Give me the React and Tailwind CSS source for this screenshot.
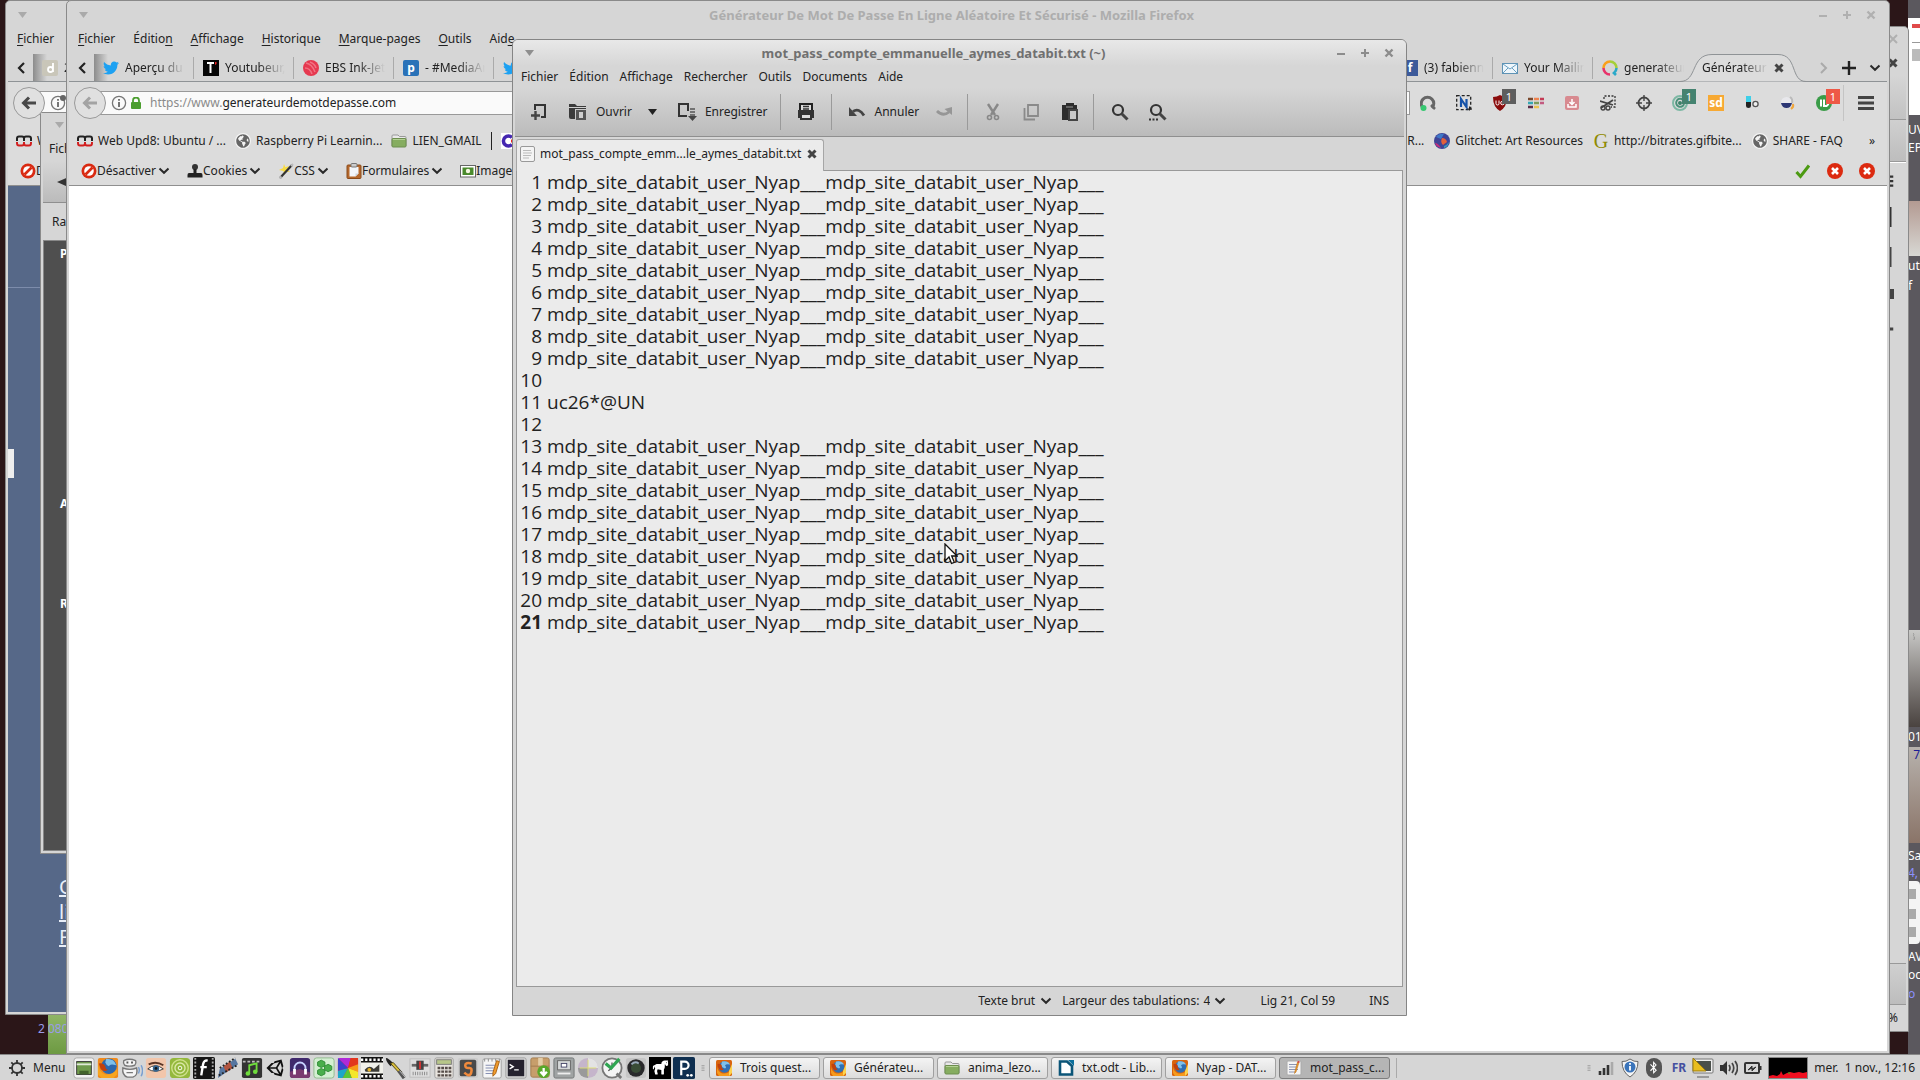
import { useState } from 'react'
import { FaTwitter, FaBluetoothB, FaGlobeAmericas, FaHorse, FaUnity } from 'react-icons/fa'

const LINE = 'mdp_site_databit_user_Nyap___mdp_site_databit_user_Nyap___'
const documentLines = [
  ...Array(9).fill(LINE),
  '',
  'uc26*@UN',
  '',
  ...Array(9).fill(LINE),
]

/* ---------- small glyphs ---------- */

function Svg({ size = 16, className = '', children, box = '0 0 16 16' }) {
  return (
    <svg viewBox={box} width={size} height={size} className={'shrink-0 ' + className} aria-hidden="true">
      {children}
    </svg>
  )
}

const Chevron = ({ className = '' }) => (
  <svg viewBox="0 0 12 8" width="12" height="8" className={'shrink-0 pointer-events-none ' + className} aria-hidden="true">
    <path d="M1.5 1.5 6 5.8l4.500-4.300" fill="none" stroke="#2a2a2a" strokeWidth="2" />
  </svg>
)

const Caret = ({ color = '#aaa' }) => (
  <svg viewBox="0 0 9 6" width="9" height="6" className="shrink-0" aria-hidden="true">
    <path d="M0 0h9L4.500 6z" fill={color} />
  </svg>
)

const BoldX = () => (
  <Svg size={10} box="0 0 10 10"><path d="M1.500 1.500l7 7M8.500 1.500l-7 7" stroke="#444" strokeWidth="3" /></Svg>
)

const Globe = () => (
  <span className="flex size-4 shrink-0 items-center justify-center rounded-full bg-[#f4f4f4]">
    <FaGlobeAmericas size={14} color="#666" />
  </span>
)

const WebUpd8Icon = () => (
  <Svg>
    <path d="M1 8V5.500Q1 3.500 3 3.500h3Q8 3.500 8 5.500V8M8 8V5.500q0-2 2-2h3q2 0 2 2V8" fill="none" stroke="#222" strokeWidth="2" />
    <path d="M1 9v1q0 2.500 2 2.500h3q2 0 2-2.500V9M8 9v1q0 2.500 2 2.500h3q2 0 2-2.500V9" fill="none" stroke="#d21f1f" strokeWidth="2" />
  </Svg>
)

const Folder = () => (
  <Svg>
    <path d="M1 3q0-1 1-1h5l1.500 1.500H14q1 0 1 1V13H1z" fill="#e8e8e8" stroke="#999" />
    <rect x="1" y="5.500" width="14" height="8.500" rx="1" fill="#86ad60" stroke="#6d8e4e" />
    <path d="M2 6.500h12" stroke="#b3d094" />
  </Svg>
)

const NoEntry = () => (
  <Svg>
    <circle cx="8" cy="8" r="7.500" fill="#d92a12" />
    <circle cx="8" cy="8" r="4.800" fill="#fff" />
    <path d="M4.500 11.500l7-7" stroke="#d92a12" strokeWidth="2.600" />
  </Svg>
)

const CookieStamp = () => (
  <Svg>
    <circle cx="8" cy="4" r="3" fill="#333" />
    <path d="M6.500 6h3v4H14q1.500 0 1.500 2v2.500h-15V12q0-2 1.500-2h4.500z" fill="#222" />
  </Svg>
)

const Wand = () => (
  <Svg>
    <path d="M6 1l1.300 3.200L11 3 9 6.500l3 2.500-4-.5L6 12 5.500 8 1 7l4-2z" fill="#f8dc45" />
    <path d="M2 15L14 2" stroke="#333" strokeWidth="2.200" />
    <path d="M13 3l2-2M1.500 15.500l2-2" stroke="#bbb" strokeWidth="2" />
  </Svg>
)

const Clipboard = () => (
  <Svg>
    <rect x="1" y="2" width="14" height="13.500" rx="1" fill="#b5682c" stroke="#8a4a1a" />
    <path d="M3.500 4h9v6.500l-3 3h-6z" fill="#f3f6fa" />
    <path d="M9.500 13.500v-3h3" fill="#cdd3da" />
    <rect x="5" y="0.500" width="6" height="3.500" rx="1" fill="#ccc" stroke="#777" />
  </Svg>
)

const Picture = () => (
  <Svg>
    <rect x=".5" y="2.500" width="15" height="11.500" fill="#fff" stroke="#666" />
    <rect x="2.500" y="4.500" width="11" height="7.500" fill="#4a8a2c" />
    <circle cx="8" cy="8" r="2.200" fill="#f4f6e0" />
  </Svg>
)

const CIcon = () => (
  <Svg>
    <rect width="16" height="16" fill="#fff" />
    <path d="M11 4.500A5 5 0 1 0 11 11.500" fill="none" stroke="#4527b0" strokeWidth="3.500" />
    <path d="M10 8h6" stroke="#e22" strokeWidth="3" />
  </Svg>
)

const InkJet = () => (
  <Svg>
    <circle cx="8" cy="8" r="8" fill="#e63950" />
    <path d="M3 3q6 1 9 9M2 8q5 0 7 6M7 2q5 2 6 6" fill="none" stroke="#f58a97" strokeWidth="1.600" opacity=".7" />
  </Svg>
)

const Glitchet = () => (
  <Svg>
    <circle cx="8" cy="8" r="8" fill="#3f4496" />
    <path d="M2 4q3-4 8-3l-3 5z" fill="#3f78c8" />
    <path d="M8 5q4 0 5 4l-4 3q-3-3-1-7z" fill="#e2603a" />
    <path d="M1 10q3 0 6 5-5-1-6-5z" fill="#c22f7c" />
    <path d="M10 13q3-1 5-4-1 5-5 6z" fill="#2f9fc0" />
  </Svg>
)

const GrayD = () => (
  <Svg>
    <rect width="16" height="16" rx="2" fill="#c9c6b9" />
    <path d="M11 3v9M11 9.500a2.500 2.500 0 1 1-5 0 2.500 2.500 0 0 1 5 0z" fill="none" stroke="#fff" strokeWidth="1.800" />
  </Svg>
)

const LetterIcon = ({ letter, box }) => (
  <span className={'flex size-4 shrink-0 items-center justify-center text-[12px] font-bold leading-none text-white ' + box}>
    {letter}
  </span>
)

const TIcon = () => (
  <Svg>
    <rect width="16" height="16" fill="#080808" />
    <path d="M4 3h7M7.500 3v10" stroke="#fff" strokeWidth="2" />
    <path d="M12 2h1.500v2L12 5z" fill="#e22" />
  </Svg>
)

const Mail = () => (
  <Svg>
    <rect x=".5" y="3.500" width="15" height="10" fill="#eef6fb" stroke="#5f93b5" />
    <path d="M1 4l7 5 7-5M1 13l5-5M15 13l-5-5" fill="none" stroke="#6aa0c2" />
  </Svg>
)

const Qwant = () => (
  <Svg>
    <path d="M8 1.500A6.500 6.500 0 0 0 1.500 8" fill="none" stroke="#f9a01b" strokeWidth="2.600" />
    <path d="M8 1.500A6.500 6.500 0 0 1 14.500 8" fill="none" stroke="#a5cf3a" strokeWidth="2.600" />
    <path d="M14.500 8a6.500 6.500 0 0 1-2.500 5l2 2" fill="none" stroke="#2aa9c9" strokeWidth="2.600" />
    <path d="M1.500 8A6.500 6.500 0 0 0 8 14.500" fill="none" stroke="#e8336b" strokeWidth="2.600" />
  </Svg>
)

const Firefox = () => (
  <Svg>
    <rect width="16" height="16" rx="1.500" fill="#d9640f" />
    <circle cx="8.500" cy="7" r="5.800" fill="#2f6fb5" />
    <path d="M6 1.500q6-1 8 3-4-1-5 1 2 2 0 3-3-1-4-3z" fill="#7fc0ea" />
    <path d="M1 2q-1 8 4 11 6 2 10-3v4l-2 2H3l-2-3z" fill="#f59a1c" />
    <path d="M1.500 4q3-1 4.500 2-1 2 1.500 3-1 2-3 1-3-2-3-6z" fill="#c2410c" />
    <path d="M13 11l3-7v9l-3 3z" fill="#fcd34d" />
  </Svg>
)

const TextFile = () => (
  <Svg>
    <rect x="1" y="1" width="14" height="14" rx="1" fill="#f5f5f5" stroke="#aaa" />
    <path d="M3 4.500h9M3 7h8M3 9.500h9M3 12h6" stroke="#8b93b0" />
    <path d="M11.500 2l-2.500 9-.5 2.500L10 12l3-9.500z" fill="#f09a2b" stroke="#b56a10" strokeWidth=".5" />
    <path d="M11.300 2.500l1.900.5.500-1.500-1.800-.700z" fill="#d64545" />
  </Svg>
)

const Office = () => (
  <Svg>
    <path d="M2 1.500h7L14 6v8.500H2z" fill="#fff" stroke="#0b5578" strokeWidth="2.600" />
    <path d="M10 0h6v6z" fill="#0b6f9c" />
  </Svg>
)

/* ---------- window pieces ---------- */

function TitleButtons({ color }) {
  return (
    <div className="flex items-center gap-2">
      <button aria-label="Réduire" className="flex size-4 items-center justify-center">
        <Svg size={10} box="0 0 10 10"><path d="M1 6h8" stroke={color} strokeWidth="2" /></Svg>
      </button>
      <button aria-label="Agrandir" className="flex size-4 items-center justify-center">
        <Svg size={10} box="0 0 10 10"><path d="M1 5h8M5 1v8" stroke={color} strokeWidth="2" /></Svg>
      </button>
      <button aria-label="Fermer" className="flex size-4 items-center justify-center">
        <Svg size={10} box="0 0 10 10"><path d="M1.500 1.500l7 7M8.500 1.500l-7 7" stroke={color} strokeWidth="2.400" /></Svg>
      </button>
    </div>
  )
}

const firefoxMenus = [
  ['', 'F', 'ichier'],
  ['Éditio', 'n', ''],
  ['', 'A', 'ffichage'],
  ['', 'H', 'istorique'],
  ['', 'M', 'arque-pages'],
  ['', 'O', 'utils'],
  ['Aid', 'e', ''],
]

function BrowserTab({ icon, label }) {
  return (
    <button className="flex h-[22px] w-[100px] shrink-0 items-center gap-[6px] border-r border-[#aaa] pl-[9px] text-left">
      {icon}
      <span className="w-[60px] overflow-hidden whitespace-nowrap [mask-image:linear-gradient(to_right,black_55%,transparent)]">{label}</span>
    </button>
  )
}

function ActiveTab({ label }) {
  return (
    <div className="relative -mb-px flex h-[28px] w-[112px] shrink-0 items-center">
      <svg viewBox="0 0 126 28" width="126" height="28" className="absolute -left-[13px] top-0" aria-hidden="true">
        <path d="M0 27.500C18 27.500 10 .5 32 .5h66c20 0 12 27 28 27" fill="#dcdcdc" stroke="#8f9396" />
      </svg>
      <button className="relative ml-[9px] w-[66px] overflow-hidden whitespace-nowrap text-left [mask-image:linear-gradient(to_right,black_60%,transparent)]">{label}</button>
      <button aria-label="Fermer l'onglet" className="relative ml-[6px]"><BoldX /></button>
    </div>
  )
}

function Badge({ children, className }) {
  return (
    <span className={'absolute -top-[6px] left-[20px] flex h-[15px] w-[14px] items-center justify-center text-[11px] leading-none text-white ' + className}>
      {children}
    </span>
  )
}

const addons = [
  {
    name: 'Qwant',
    icon: (
      <Svg>
        <path d="M3 13A6.300 6.300 0 1 1 12 13" fill="none" stroke="#666" strokeWidth="3" />
        <path d="M11 10l4 4" stroke="#666" strokeWidth="2.500" />
        <circle cx="3.500" cy="13" r="3" fill="#37c871" />
      </Svg>
    ),
  },
  {
    name: 'Nimbus',
    icon: (
      <Svg>
        <rect x=".7" y=".7" width="14" height="14" fill="none" stroke="#222" strokeWidth="1.300" strokeDasharray="3 2" />
        <path d="M5 12V4l5.500 8V4" fill="none" stroke="#1552a8" strokeWidth="2.200" />
        <path d="M11 14h5M13.500 11.500v4" stroke="#222" />
      </Svg>
    ),
  },
  {
    name: 'uBlock',
    icon: (
      <Svg>
        <path d="M8 0q3 2 7 2 0 10-7 14Q1 12 1 2q4 0 7-2z" fill="#8a0b0b" />
        <path d="M4 5.500v3q0 1.500 1.500 1.500T7 8.500v-3" fill="none" stroke="#fff" />
        <circle cx="10.500" cy="8" r="1.800" fill="none" stroke="#fff" />
      </Svg>
    ),
    badge: ['1', 'bg-[#5e5e5e]'],
  },
  {
    name: 'Palette',
    icon: (
      <Svg>
        <path d="M0 4h5" stroke="#7a4a2e" strokeWidth="2.600" />
        <path d="M6 4h5" stroke="#ef8350" strokeWidth="2.600" />
        <path d="M12 4h4" stroke="#c43b55" strokeWidth="2.600" />
        <path d="M0 8h5" stroke="#35a7b5" strokeWidth="2.600" />
        <path d="M6 8h5" stroke="#7d9c5a" strokeWidth="2.600" />
        <path d="M12 8h4" stroke="#c25a80" strokeWidth="2.600" />
        <path d="M0 12h5" stroke="#5a2e4a" strokeWidth="2.600" />
        <path d="M6 12h5" stroke="#ecc352" strokeWidth="2.600" />
      </Svg>
    ),
  },
  {
    name: 'Télécharger',
    icon: (
      <Svg>
        <rect x="1" y="1" width="14" height="14" rx="2" fill="#d88a90" />
        <path d="M8 4v5M5.500 7L8 9.500 10.500 7M4 9v3h8V9" fill="none" stroke="#fff" strokeWidth="1.500" />
      </Svg>
    ),
  },
  {
    name: 'Capture',
    icon: (
      <Svg>
        <path d="M4 4V1h11v11h-4" fill="none" stroke="#333" strokeWidth="1.300" strokeDasharray="2 1.500" />
        <path d="M0 6l13 4M1 13L13 5" stroke="#444" strokeWidth="1.800" />
        <circle cx="3" cy="13" r="2" fill="none" stroke="#444" strokeWidth="1.400" />
        <circle cx="8" cy="13" r="2" fill="none" stroke="#444" strokeWidth="1.400" />
      </Svg>
    ),
  },
  {
    name: 'Viseur',
    icon: (
      <Svg>
        <circle cx="8" cy="8" r="5.500" fill="none" stroke="#444" strokeWidth="1.800" />
        <path d="M8 0v6M8 10v6M0 8h6M10 8h6" stroke="#444" strokeWidth="1.400" />
      </Svg>
    ),
  },
  {
    name: 'Actualiser',
    icon: (
      <Svg>
        <circle cx="8" cy="8" r="7" fill="none" stroke="#7db8a4" strokeWidth="2" />
        <path d="M11 5a4 4 0 1 0 1 4" fill="none" stroke="#4a917a" strokeWidth="2" />
        <circle cx="8" cy="8" r="2" fill="#3c8168" />
      </Svg>
    ),
    badge: ['1', 'bg-[#458370]'],
  },
  { name: 'sd', icon: <LetterIcon letter="sd" box="bg-[#f7a933]" /> },
  {
    name: 'Pilule',
    icon: (
      <Svg>
        <path d="M2 1h5v6H2z" fill="#3fcfe8" />
        <path d="M2 7h5v4q0 2-2.500 2T2 11z" fill="#222" />
        <circle cx="11.500" cy="9" r="2.600" fill="#eee" stroke="#555" strokeWidth="1.300" />
      </Svg>
    ),
  },
  {
    name: 'Orbite',
    icon: (
      <Svg>
        <circle cx="6.500" cy="7.500" r="5.500" fill="#e8e8ec" />
        <path d="M1 8h11q-1 5-5.500 5T1 8z" fill="#2c3674" />
        <path d="M10 2q3 2 2 6" fill="none" stroke="#bbb" strokeWidth="2" />
        <path d="M13 9q1 3-2 5" fill="none" stroke="#f0a63c" strokeWidth="2" />
      </Svg>
    ),
  },
  {
    name: 'Pushbullet',
    icon: (
      <Svg>
        <circle cx="8" cy="8" r="8" fill="#3a9c48" />
        <path d="M5 4.500v7M8 4.500v6.500h2.500q2-1 2-3" fill="none" stroke="#fff" strokeWidth="2" />
      </Svg>
    ),
    badge: ['1', 'bg-[#ee5846]'],
  },
]

function ToolItem({ icon, label }) {
  return (
    <button className="flex shrink-0 items-center">
      {icon}
      <span>{label}</span>
      <Chevron className="ml-[2px]" />
    </button>
  )
}

function Bookmark({ icon, label }) {
  return (
    <a href="#" className="flex shrink-0 items-center gap-[5px]">
      {icon}
      <span>{label}</span>
    </a>
  )
}

// A covered window only shows the first entry of each bar.
function FirefoxWindow({ id, className, title, tabs, covered, url, page }) {
  const [address, setAddress] = useState(url)
  const menus = covered ? firefoxMenus.slice(0, 1) : firefoxMenus

  return (
    <section className={'absolute flex flex-col overflow-hidden rounded-t-[5px] border border-[#8a8a8a] bg-[#d6d6d6] px-[2px] pb-[2px] whitespace-nowrap ' + className}>
      <header className="flex h-[27px] shrink-0 items-center justify-between pl-[10px] pr-2">
        <Caret />
        <h2 className="text-[13px] font-bold text-[#adadad]">{title}</h2>
        {!covered && <TitleButtons color="#b0b0b0" />}
      </header>

      <nav className="flex h-[22px] shrink-0 items-center gap-[18px] pl-[9px]">
        {menus.map(([before, key, after]) => (
          <button key={before + key + after}>
            {before}<u className="underline-offset-2">{key}</u>{after}
          </button>
        ))}
      </nav>

      <div className="flex h-8 shrink-0 items-end border-b border-[#8f9396]">
        <button aria-label="Onglets précédents" className="flex h-[27px] w-[25px] shrink-0 items-center pl-2">
          <Svg size={12} box="0 0 12 12"><path d="M8 1L3 6l5 5" fill="none" stroke="#222" strokeWidth="2.200" /></Svg>
        </button>
        <div className="flex h-[27px] items-center bg-[linear-gradient(to_right,#8c8c8c,#d6d6d6_14px)]">
          {tabs.map((tab, i) => <BrowserTab key={i} {...tab} />)}
        </div>
        <div className="flex-1" />
        {!covered && (
          <>
            <div className="flex h-[27px] items-center">
              <BrowserTab icon={<LetterIcon letter="f" box="bg-[#3d5a9a]" />} label="(3) fabienne" />
              <BrowserTab icon={<Mail />} label="Your Mailing" />
              <button className="flex h-[22px] w-[100px] shrink-0 items-center gap-[6px] pl-[9px] text-left">
                <Qwant />
                <span className="w-[60px] overflow-hidden [mask-image:linear-gradient(to_right,black_55%,transparent)]">generateur</span>
              </button>
            </div>
            <ActiveTab label="Générateur" />
            <div className="flex h-[27px] w-[82px] shrink-0 items-center justify-end gap-[13px] pr-[6px]">
              <button aria-label="Onglets suivants">
                <Svg size={12} box="0 0 12 12"><path d="M4 1l5 5-5 5" fill="none" stroke="#aaa" strokeWidth="2" /></Svg>
              </button>
              <button aria-label="Nouvel onglet">
                <Svg size={14} box="0 0 14 14"><path d="M0 7h14M7 0v14" stroke="#222" strokeWidth="2.400" /></Svg>
              </button>
              <button aria-label="Tous les onglets"><Chevron /></button>
            </div>
          </>
        )}
      </div>

      <div className="flex h-[43px] shrink-0 items-center bg-[#dcdcdc] pb-[2px] pl-[5px]">
        <button aria-label="Page précédente" className="relative z-10 flex size-8 shrink-0 items-center justify-center rounded-full border border-[#999] bg-[#e0e0e0]">
          <Svg><path d="M15 8H3M8 2.500L2.500 8 8 13.500" fill="none" stroke={covered ? '#484848' : '#a3a3a3'} strokeWidth="3" /></Svg>
        </button>
        <div className="-ml-2 flex h-6 flex-1 items-center border border-[#999] bg-[#fafafa] pl-3">
          <Svg className="mr-[3px]">
            <circle cx="8" cy="8" r="6.600" fill="none" stroke="#777" strokeWidth="1.300" />
            <path d="M8 7v5M8 4v1.800" stroke="#666" strokeWidth="1.800" />
            {covered && <circle cx="13" cy="3" r="3" fill="#666" />}
          </Svg>
          {!covered && (
            <>
              <Svg size={12} box="0 0 12 12" className="mr-[8px]">
                <path d="M3 6V3.500a3 3 0 0 1 6 0V6" fill="none" stroke="#4b9e2f" strokeWidth="1.800" />
                <rect x="1" y="5" width="10" height="7" rx="1" fill="#4b9e2f" />
              </Svg>
              <label htmlFor={id} className="text-[#8a8a8a]">https://www.</label>
              <input
                id={id}
                value={address}
                onChange={(e) => setAddress(e.target.value)}
                className="min-w-0 flex-1 bg-transparent text-[#222] outline-none"
              />
            </>
          )}
        </div>
        {!covered && (
          <div className="flex items-center">
            {addons.map(({ name, icon, badge }) => (
              <button key={name} aria-label={name} className="relative flex w-9 items-center justify-center">
                {icon}
                {badge && <Badge className={badge[1]}>{badge[0]}</Badge>}
              </button>
            ))}
            <div className="ml-[1px] h-9 w-px bg-[#c4c4c4]" />
            <button aria-label="Ouvrir le menu" className="ml-[14px] mr-[13px]">
              <Svg><path d="M0 2.500h16M0 8h16M0 13.500h16" stroke="#444" strokeWidth="3" /></Svg>
            </button>
          </div>
        )}
      </div>

      <div className="flex h-8 shrink-0 items-center justify-between bg-[#dcdcdc] pl-2 pr-3">
        {covered ? (
          <Bookmark icon={<WebUpd8Icon />} label="Web" />
        ) : (
          <>
            <div className="flex items-center gap-[9px]">
              <Bookmark icon={<WebUpd8Icon />} label="Web Upd8: Ubuntu / ..." />
              <Bookmark icon={<Globe />} label="Raspberry Pi Learnin..." />
              <Bookmark icon={<Folder />} label="LIEN_GMAIL" />
              <div className="h-[18px] w-px bg-[#222]" />
              <CIcon />
            </div>
            <div className="flex items-center gap-[10px]">
              <a href="#">R...</a>
              <Bookmark icon={<Glitchet />} label="Glitchet: Art Resources" />
              <Bookmark
                icon={<span className="w-4 text-center font-['Liberation_Serif'] text-[20px] leading-none text-[#8f8a00]">G</span>}
                label="http://bitrates.gifbite..."
              />
              <Bookmark icon={<Globe />} label="SHARE - FAQ" />
              <button className="ml-4">»</button>
            </div>
          </>
        )}
      </div>

      <div className="flex h-[29px] shrink-0 items-center justify-between border-b border-[#8f8f8f] bg-[#dcdcdc] px-3">
        {covered ? (
          <ToolItem icon={<NoEntry />} label="Dés" />
        ) : (
          <>
            <div className="flex items-center gap-[17px]">
              <ToolItem icon={<NoEntry />} label="Désactiver" />
              <ToolItem icon={<CookieStamp />} label="Cookies" />
              <ToolItem icon={<Wand />} label="CSS" />
              <ToolItem icon={<Clipboard />} label="Formulaires" />
              <ToolItem icon={<Picture />} label="Images" />
            </div>
            <div className="flex items-center gap-4">
              <Svg><path d="M1.500 9l4 4.500L14 2.500" fill="none" stroke="#4c9a12" strokeWidth="3" /></Svg>
              {[0, 1].map((n) => (
                <Svg key={n}>
                  <circle cx="8" cy="8" r="8" fill="#dc2a10" />
                  <path d="M5 5l6 6M11 5l-6 6" stroke="#fff" strokeWidth="2.600" />
                </Svg>
              ))}
            </div>
          </>
        )}
      </div>

      <div className={'min-h-0 flex-1 ' + page} />
    </section>
  )
}

/* ---------- text editor ---------- */

const Separator = () => <div className="h-9 w-px bg-[#9a9a9a]" />

function EditorWindow() {
  const [text, setText] = useState(documentLines.join('\n'))
  const lineCount = text.split('\n').length

  return (
    <section className="absolute bottom-[38px] left-[512px] top-[39px] flex w-[895px] flex-col rounded-t-[6px] border border-[#858585] bg-[#d6d6d6] whitespace-nowrap">
      <header className="flex h-[26px] shrink-0 items-center justify-between rounded-t-[5px] bg-linear-to-b from-[#e8e8e8] to-[#d6d6d6] pl-3 pr-[9px]">
        <Caret color="#8f8f8f" />
        <h1 className="text-[13px] font-bold text-[#707070]">mot_pass_compte_emmanuelle_aymes_databit.txt (~)</h1>
        <TitleButtons color="#8c8c8c" />
      </header>

      <nav className="flex h-[22px] shrink-0 items-center gap-[11px] pl-[8px]">
        {['Fichier', 'Édition', 'Affichage', 'Rechercher', 'Outils', 'Documents', 'Aide'].map((item) => (
          <button key={item}>{item}</button>
        ))}
      </nav>

      <div className="mx-[2px] flex h-[49px] shrink-0 items-center border-b border-[#8f8f8f] bg-linear-to-b from-[#d6d6d6] to-[#bbbbbb] pl-[15px]">
        <button aria-label="Nouveau" className="mr-5">
          <Svg size={18} box="0 0 18 18">
            <path d="M5 7V2h10v12h-4" fill="none" stroke="#333" strokeWidth="2" />
            <path d="M1 12.500h9M5.500 8v9" stroke="#444" strokeWidth="2.400" />
          </Svg>
        </button>
        <button className="flex items-center gap-2">
          <Svg size={20} box="0 0 20 20">
            <path d="M1 2h6l2 2h9v3H7v10H3q-2 0-2-2z" fill="#3a3a3a" />
            <path d="M1 5.500h17" stroke="#d0d0d0" />
            <path d="M8 8h10v10H8z" fill="#555" />
            <path d="M11 10h4v6h-4z" fill="#cfcfcf" />
          </Svg>
          Ouvrir
        </button>
        <button aria-label="Documents récents" className="ml-4 mr-5"><Caret color="#222" /></button>
        <button className="mr-[13px] flex items-center gap-2">
          <Svg size={20} box="0 0 20 20">
            <path d="M10 14H2V2h9v7" fill="none" stroke="#333" strokeWidth="2" />
            <path d="M13 7h5M13 10h5M13 13h5" stroke="#555" strokeWidth="1.500" />
            <path d="M11 14h9l-4.500 5z" fill="#444" />
          </Svg>
          Enregistrer
        </button>
        <Separator />
        <button aria-label="Imprimer" className="mx-4">
          <Svg size={18} box="0 0 18 18">
            <path d="M3 7V1h12v6" fill="#ddd" stroke="#222" strokeWidth="2" />
            <path d="M6 3.500h6M6 6h6" stroke="#333" strokeWidth="1.400" />
            <path d="M1 7h16v8h-2v2H3v-2H1z" fill="#333" />
            <path d="M5 12h8v3H5z" fill="#ddd" />
          </Svg>
        </button>
        <Separator />
        <button className="ml-4 mr-4 flex items-center gap-2">
          <Svg size={18} box="0 0 18 18">
            <path d="M5 8.500q6-4 11 4" fill="none" stroke="#444" strokeWidth="2.800" />
            <path d="M1 4v9h8z" fill="#444" />
          </Svg>
          Annuler
        </button>
        <button aria-label="Rétablir" className="mr-[14px]">
          <Svg size={18} box="0 0 18 18">
            <path d="M2 8q6 6 12 1" fill="none" stroke="#969696" strokeWidth="2.800" />
            <path d="M17 4v8L9.500 6z" fill="#969696" />
          </Svg>
        </button>
        <Separator />
        <button aria-label="Couper" className="ml-4">
          <Svg size={18} box="0 0 18 18">
            <path d="M4 1l7 11M14 1L7 12" stroke="#888" strokeWidth="2.400" />
            <circle cx="5.500" cy="14.500" r="2" fill="none" stroke="#888" strokeWidth="1.600" />
            <circle cx="12.500" cy="14.500" r="2" fill="none" stroke="#888" strokeWidth="1.600" />
          </Svg>
        </button>
        <button aria-label="Copier" className="ml-5">
          <Svg size={18} box="0 0 18 18">
            <path d="M6 2h10v11H6z" fill="none" stroke="#8a8a8a" strokeWidth="1.800" />
            <path d="M2.500 5v11.500H13" fill="none" stroke="#8a8a8a" strokeWidth="1.800" />
          </Svg>
        </button>
        <button aria-label="Coller" className="ml-5 mr-[13px]">
          <Svg size={20} box="0 0 20 20">
            <path d="M2 3h4V1h8v2h3v5h-7v10H2z" fill="#2e2e2e" />
            <path d="M9 8h8v10H9z" fill="#c9c9c9" stroke="#444" strokeWidth="2" />
            <path d="M6 5h7" stroke="#999" />
          </Svg>
        </button>
        <Separator />
        <button aria-label="Rechercher" className="ml-4">
          <Svg size={20} box="0 0 20 20">
            <circle cx="8" cy="8" r="5" fill="none" stroke="#333" strokeWidth="2.200" />
            <path d="M11.500 11.500l6 6" stroke="#444" strokeWidth="3" />
          </Svg>
        </button>
        <button aria-label="Remplacer" className="ml-[18px]">
          <Svg size={20} box="0 0 20 20">
            <circle cx="8" cy="8" r="5" fill="none" stroke="#333" strokeWidth="2.200" />
            <path d="M11.500 11.500l6 6" stroke="#444" strokeWidth="3" />
            <path d="M1 17.500h9" stroke="#333" strokeWidth="2" strokeDasharray="2 1.500" />
          </Svg>
        </button>
      </div>

      <div className="flex shrink-0 pl-[3px] pt-[2px]">
        <div className="relative z-10 -mb-px flex h-8 items-center rounded-t-[3px] border border-b-0 border-[#a6a6a6] bg-[#ebebeb] px-[3px] pb-[4px]">
          <Svg>
            <rect x=".5" y=".5" width="14" height="15" rx="1.500" fill="#f4f4f4" stroke="#999" />
            <path d="M3 4.500h8M3 7h9M3 9.500h8M3 12h6" stroke="#bbb" />
          </Svg>
          <button className="ml-[4px] mr-[6px]">mot_pass_compte_emm...le_aymes_databit.txt</button>
          <button aria-label="Fermer le document" className="mr-[3px]"><BoldX /></button>
        </div>
      </div>

      <div className="relative mx-[3px] flex min-h-0 flex-1 border border-[#999] bg-[#ebebeb] font-['Open_Sans',sans-serif] text-[19px] leading-[22px] text-[#222]">
        <ol className="w-[25px] shrink-0 text-right">
          {Array.from({ length: lineCount }, (_, i) => (
            <li key={i} className={i === lineCount - 1 ? 'font-bold' : ''}>{i + 1}</li>
          ))}
        </ol>
        <textarea
          aria-label="Document"
          value={text}
          onChange={(e) => setText(e.target.value)}
          spellCheck={false}
          className="ml-[5px] min-w-0 flex-1 resize-none overflow-hidden bg-transparent outline-none"
        />
        <svg viewBox="0 0 14 22" width="14" height="22" className="absolute left-[427px] top-[372px]" aria-hidden="true">
          <path d="M1 1v17l4-4 2.500 6.500 2.800-1.200L7.700 13H13z" fill="#fff" stroke="#111" strokeWidth="1.300" />
        </svg>
      </div>

      <footer className="flex h-7 shrink-0 items-center justify-end pr-[17px]">
        <label className="flex items-center gap-[4px]">
          <select aria-label="Langage" className="appearance-none outline-none">
            <option>Texte brut</option>
          </select>
          <Chevron />
        </label>
        <label className="ml-[10px] flex items-center gap-[4px]">
          Largeur des tabulations:
          <select className="appearance-none outline-none">
            <option>4</option>
          </select>
          <Chevron />
        </label>
        <span className="ml-[34px]">Lig 21, Col 59</span>
        <span className="ml-[34px]">INS</span>
      </footer>
    </section>
  )
}

/* ---------- windows and files seen at the screen edges ---------- */

function FileManagerEdge() {
  return (
    <section className="absolute left-10 top-28 flex h-[742px] w-[500px] flex-col border border-[#8a8a8a] bg-[#d6d6d6] px-[2px] pb-[2px]">
      <div className="flex h-6 items-center pl-3"><Caret /></div>
      <div className="flex h-6 items-center pl-[6px]">Fichier</div>
      <div className="flex h-[42px] items-center border-b border-[#8f8f8f] bg-linear-to-b from-[#d6d6d6] to-[#bbb] pl-[14px]">
        <Svg size={14}><path d="M16 1v14L0 8z" fill="#333" /></Svg>
      </div>
      <div className="flex h-[37px] items-center pl-[9px]">Rac</div>
      <div className="flex-1 border border-[#888] bg-[#4f4f4f] pl-4 text-[12px] font-bold leading-4 text-white">
        <p className="mt-[5px]">P</p>
        <p className="mt-[234px]">A</p>
        <p className="mt-[84px]">R</p>
      </div>
    </section>
  )
}

function RightEdgeWindow() {
  return (
    <section className="absolute right-[11px] top-[26px] flex h-[1006px] w-[200px] flex-col items-end rounded-tr-[5px] border border-[#8a8a8a] bg-[#d6d6d6] pr-[2px]">
      <div className="flex h-6 items-center pr-2"><Svg size={10} box="0 0 10 10"><path d="M1 1l8 8M9 1l-8 8" stroke="#b0b0b0" strokeWidth="2" /></Svg></div>
      <div className="flex h-6 items-center pr-2"><BoldX /></div>
      <div className="h-[45px] w-full border-b border-[#999] bg-linear-to-b from-[#d6d6d6] to-[#c2c2c2]" />
      <div className="h-[42px] w-full border-b border-[#999] bg-linear-to-b from-[#d0d0d0] to-[#bdbdbd]" />
      <div className="flex w-full flex-1 flex-col items-end gap-5 border-t border-white pr-3 pt-3">
        <Svg size={12}><path d="M8 2h7M8 8h7M8 14h7" stroke="#333" strokeWidth="3" /></Svg>
        <Svg size={20}><path d="M1 1h12v14H1z" fill="none" stroke="#333" strokeWidth="2" /></Svg>
        <Svg size={20}><path d="M1 1h12v14H1zM7 5h3M7 9h3" fill="none" stroke="#444" strokeWidth="2" /></Svg>
        <Svg><path d="M1 3h14v8H1zM8 11v4" fill="#444" stroke="#444" strokeWidth="2" /></Svg>
        <Svg size={12}><path d="M8 1v14M1 8h14" stroke="#444" strokeWidth="4" /></Svg>
      </div>
      <div className="h-[42px] w-full border-y border-[#999] bg-linear-to-b from-[#d0d0d0] to-[#bdbdbd]" />
      <div className="flex h-[26px] items-center pr-2">%</div>
    </section>
  )
}

function DesktopFiles() {
  return (
    <div className="absolute inset-y-0 right-0 w-[12px] overflow-hidden bg-[#5b585e] text-white">
      <div className="mt-[18px] h-[97px] bg-white pt-[6px]">
        <div className="ml-1 h-1 bg-[#e04a4a]" />
        <div className="ml-1 mt-[14px] h-px bg-[#999]" />
        <div className="ml-1 mt-[6px] h-3 bg-[#bbb]" />
      </div>
      <p className="mt-[6px] leading-[18px]">UV</p>
      <p className="leading-[18px]">EP</p>
      <div className="mt-[44px] h-[55px] bg-linear-to-b from-[#b39a92] to-[#d8d8d4]" />
      <p className="leading-[20px]">utr</p>
      <p className="leading-[20px]">f</p>
      <div className="mt-[334px] h-[97px] bg-linear-to-b from-[#c9c9c7] to-[#4a4340]">
        <Svg size={12} box="0 0 12 80">
          <path d="M0 20q10 4 2 20M2 46h7v16H0" fill="none" stroke="#777" strokeWidth="3" />
        </Svg>
      </div>
      <p className="leading-[20px]">01</p>
      <div className="h-[96px] bg-linear-to-b from-[#b7b2ad] to-[#8a7468] text-right text-[#1c1c96]">7</div>
      <p className="mt-[4px] leading-[18px]">Sa</p>
      <p className="leading-[16px] text-[#8c90ff]">4,</p>
      <div className="h-[63px] rounded-r-[4px] bg-[#f4f4f4] pt-[8px]">
        <div className="h-[10px] w-2 bg-[#aaa]" />
        <div className="mt-[10px] h-[10px] w-2 bg-[#aaa]" />
        <div className="mt-[8px] h-[10px] w-2 bg-[#aaa]" />
      </div>
      <p className="mt-[4px] leading-[18px]">AV</p>
      <p className="leading-[18px]">oc</p>
      <p className="leading-[20px] text-[#8c90ff]">o</p>
    </div>
  )
}

/* ---------- taskbar ---------- */

const launchers = [
  ['Bureau', <><rect x="1" y="1" width="22" height="22" rx="3" fill="#f2f2f2" stroke="#aaa" /><rect x="4" y="5" width="16" height="14" fill="#6f9a4c" stroke="#333" /><path d="M4 8h16" stroke="#dfe9d6" strokeWidth="2" /><path d="M7 15h10v4H7z" fill="#42632b" /></>],
  ['Firefox', <><rect x="1" y="1" width="22" height="22" rx="2" fill="#ef8a1d" /><circle cx="13" cy="10" r="8.500" fill="#2c68ae" /><path d="M10 2q9 0 11 7-7-2-8 1-3-1-4-4z" fill="#7fc0ea" /><path d="M1 4q0 12 8 15 8 1 13-6v6l-4 4H5l-4-4z" fill="#f7a51f" /><path d="M2 7q5-1 7 3 0 3 3 4-5 3-8-1z" fill="#c2410c" /></>],
  ['Discussion', <><path d="M3 4q6-3 13 0 1 3-1 5-6 2-11 0-2-2-1-5z" fill="#f4f4f4" stroke="#777" strokeWidth="1.500" /><path d="M6 6h2M11 6h2" stroke="#555" strokeWidth="2" /><path d="M2 12q8 3 15 0 2 8-4 10H7Q1 20 2 12zM6 17h7" fill="#f4f4f4" stroke="#777" strokeWidth="1.500" /><path d="M19 11q2 3 0 7M22 9q3 6 0 12" fill="none" stroke="#7a9fd0" strokeWidth="1.600" /></>],
  ['Œil', <><rect x="1" y="1" width="22" height="22" rx="3" fill="#f2c6ab" /><path d="M4 8q8-4 16 1" fill="none" stroke="#5a3424" strokeWidth="2" /><path d="M3 13q8-7 17 0-9 5-17 0z" fill="#fff" stroke="#333" /><circle cx="12" cy="12.500" r="3.500" fill="#35648f" /><circle cx="12" cy="12.500" r="1.500" fill="#111" /></>],
  ['Spirale', <><rect x="1" y="1" width="22" height="22" rx="4" fill="#94b83c" /><circle cx="12" cy="12" r="9" fill="none" stroke="#cfe08c" strokeWidth="1.500" /><circle cx="12" cy="12" r="5.500" fill="none" stroke="#dce9a8" strokeWidth="1.500" /><circle cx="12" cy="12" r="2" fill="none" stroke="#fff" /></>],
  ['Film', <><rect width="24" height="24" rx="2" fill="#151515" /><path d="M2.500 1v22M21.500 1v22" stroke="#aaa" strokeWidth="2" strokeDasharray="2 2" /><path d="M16 4q-4-1-5 4l-2 12M8 11h7" fill="none" stroke="#fff" strokeWidth="2.600" /></>],
  ['Montage', <><path d="M1 23L3 13 20 2l3 6z" fill="#5676a0" /><path d="M7 10l7-5 3 7-7 5z" fill="#b2553f" /><path d="M2 20L22 9M3 12L20 1" stroke="#222" strokeWidth="2" strokeDasharray="2 2" /></>],
  ['Musique', <><rect x="1" y="1" width="22" height="22" rx="2" fill="#333" /><path d="M2 5h20" stroke="#bbb" strokeWidth="2" strokeDasharray="3 2" /><path d="M9 18V9l8-2v9" fill="none" stroke="#6fdc3c" strokeWidth="2" /><circle cx="7.500" cy="18" r="2.500" fill="#6fdc3c" /><circle cx="15.500" cy="16" r="2.500" fill="#6fdc3c" /></>],
  ['Unity', <FaUnity x="1" y="1" size={22} color="#111" />],
  ['Casque', <><rect x="1" y="1" width="22" height="22" rx="3" fill="#40296c" /><path d="M1 16l11-3 11 4v3q0 3-3 3H4q-3 0-3-3z" fill="#7a3b70" /><path d="M6 15v-3a6 6 0 0 1 12 0v3" fill="none" stroke="#c7d2ff" strokeWidth="2" /><path d="M6 13v6M18 13v6" stroke="#fff" strokeWidth="3" /></>],
  ['Modules', <><rect x="1" y="1" width="22" height="22" rx="3" fill="#d4efd2" stroke="#8cba8a" /><path d="M9 3.500l4 2v4l-4 2-4-2v-4zM16.500 8l4 2v4l-4 2-4-2v-4zM9 12.500l4 2v4l-4 2-4-2v-4z" fill="#4aae4c" stroke="#2e8b35" /></>],
  ['Couleurs', <><rect x="1" y="1" width="22" height="22" rx="3" fill="#e23" /><path d="M12 12L1 1h14z" fill="#b02ad8" /><path d="M12 12L15 1h8v7z" fill="#e2361c" /><path d="M12 12l11-4v8z" fill="#f79a16" /><path d="M12 12l11 4v7h-7z" fill="#f4e72a" /><path d="M12 12l4 11H6z" fill="#58c737" /><path d="M12 12L6 23H1v-8z" fill="#1ca7c9" /><path d="M12 12L1 15V1z" fill="#3c41cf" /></>],
  ['Vidéo', <><rect width="24" height="24" fill="#111" /><path d="M0 3h24M0 21h24" stroke="#fff" strokeWidth="2.500" strokeDasharray="2.500 2" /><rect y="6" width="24" height="12" fill="#f0f0ea" /><path d="M4 14q5-6 10-1l6-5v8H5z" fill="#3c3c38" /><circle cx="9" cy="14" r="2" fill="#e7b52a" /></>],
  ['Pinceau', <><path d="M1 1q3 0 8 6l-3 3Q1 5 1 1z" fill="#222" /><path d="M6 7l3-1 9 10-2 2z" fill="#d9bd3a" stroke="#443c10" /><path d="M15 15l6 8" stroke="#555" strokeWidth="4" /><path d="M16 15l6 7" stroke="#ccc" /></>],
  ['Réglages', <><rect x="1" y="2" width="22" height="20" fill="#dedede" stroke="#bbb" /><path d="M3 9h18" stroke="#666" strokeWidth="3" /><rect x="8" y="4" width="8" height="10" fill="#444" /><path d="M12 5v8" stroke="#d33" strokeWidth="2" /><path d="M4 18h16" stroke="#888" strokeWidth="4" strokeDasharray="1 1.500" /></>],
  ['Calculatrice', <><rect x="2" y="1" width="20" height="22" rx="2" fill="#e8e4de" stroke="#999" /><rect x="4" y="3" width="16" height="5" fill="#b7c689" stroke="#777" /><path d="M5 12h15M5 16h15M5 20h15" stroke="#554c48" strokeWidth="2.500" strokeDasharray="3 1" /></>],
  ['Sublime', <><rect x="1" y="1" width="22" height="22" rx="2" fill="#ccc" /><rect x="3" y="3" width="18" height="18" rx="2" fill="#4a4a4a" /><path d="M16 7q-7-1.500-7 2t4 3 2.500 5-7.500 0" fill="none" stroke="#f08a3c" strokeWidth="2.800" /></>],
  ['Pluma', <><rect x="2" y="2" width="20" height="21" rx="2" fill="#f6f6f6" stroke="#999" /><path d="M4 2v3M8 2v3M12 2v3M16 2v3M20 2v3" stroke="#888" /><path d="M5 9h11M5 12h9M5 15h11M5 18h8" stroke="#7c86ac" /><path d="M17 4l-4 13v4l3-3 4-13z" fill="#f09a2b" stroke="#a55f0e" /></>],
  ['Terminal', <><rect x="1" y="1" width="22" height="22" rx="2" fill="#ddd" stroke="#999" /><rect x="3" y="3" width="18" height="18" fill="#25222e" /><path d="M5 8l4 2.500L5 13M10 14h5" fill="none" stroke="#fff" strokeWidth="1.500" /></>],
  ['Paquets', <><rect x="2" y="1" width="20" height="21" rx="2" fill="#c79e6b" stroke="#a17b4d" /><path d="M10 1h5v9h-5z" fill="#e4cda7" /><path d="M2 10h20" stroke="#a17b4d" /><circle cx="16" cy="16" r="7" fill="#58a82a" /><path d="M16 12v7M12.500 16l3.500 4 3.500-4" fill="none" stroke="#fff" strokeWidth="2.500" /></>],
  ['Archives', <><rect x="1" y="1" width="22" height="22" rx="2" fill="#9fa3a3" stroke="#707474" /><rect x="5" y="4" width="14" height="10" fill="#d5d8d8" stroke="#666" /><rect x="9" y="7" width="6" height="4" fill="#fff" stroke="#446" /><path d="M5 18h14" stroke="#eee" strokeWidth="2" /></>],
  ['Disque', <><circle cx="12" cy="12" r="11" fill="#c5b5cb" /><path d="M12 1a11 11 0 0 1 11 11H12z" fill="#e3e3e3" /><path d="M12 12v11A11 11 0 0 1 1 12z" fill="#9a9a9a" /><path d="M12 3v18M3 12h18" stroke="#dede70" /></>],
  ['Horloge', <><circle cx="12" cy="12" r="10.500" fill="#f4f4f4" stroke="#777" strokeWidth="2" /><path d="M12 6v6l-4 3" fill="none" stroke="#555" strokeWidth="1.400" /><path d="M5 7l6 5 9-10" fill="none" stroke="#2fa552" strokeWidth="3.500" /><path d="M17 18l5 5" stroke="#777" strokeWidth="3" /></>],
  ['Objectif', <><rect x="1" y="1" width="22" height="22" rx="3" fill="#c6c6c6" /><circle cx="12" cy="12" r="9.500" fill="#2a2a2c" /><circle cx="12" cy="12" r="5.500" fill="#394c36" /><path d="M7 8q4-4 8-1" fill="none" stroke="#9ab" strokeWidth="2" /></>],
  ['Cheval', <><rect width="24" height="24" fill="#000" /><FaHorse x="4" y="3" size={17} color="#fff" /></>],
  ['Processing', <><rect width="24" height="24" rx="2" fill="#0f2f50" /><path d="M9 20V5h4a4 4 0 0 1 0 8H9" fill="none" stroke="#fff" strokeWidth="2.400" /><circle cx="16" cy="20" r="1.500" fill="#fff" /><circle cx="20" cy="20" r="1.500" fill="#fff" /></>],
]

const tasks = [
  { label: 'Trois quest...', icon: <Firefox /> },
  { label: 'Générateu...', icon: <Firefox /> },
  { label: 'anima_lezo...', icon: <Folder /> },
  { label: 'txt.odt - Lib...', icon: <Office /> },
  { label: 'Nyap - DAT...', icon: <Firefox /> },
  { label: 'mot_pass_c...', icon: <TextFile />, active: true },
]

const Grip = () => (
  <Svg size={6} box="0 0 6 8"><path d="M1 1h4M1 4h4M1 7h4" stroke="#888" /></Svg>
)

function Taskbar() {
  return (
    <footer className="flex h-[26px] shrink-0 items-center border-t border-[#888] bg-[#d6d6d6] whitespace-nowrap">
      <button className="flex w-[72px] shrink-0 items-center gap-2 pl-[9px]">
        <Svg>
          <circle cx="8" cy="8" r="5" fill="none" stroke="#333" strokeWidth="1.800" />
          <path d="M8 0v3M8 13v3M0 8h3M13 8h3M2.300 2.300l2 2M11.700 11.700l2 2M2.300 13.700l2-2M11.700 4.300l2-2" stroke="#333" strokeWidth="1.800" />
        </Svg>
        Menu
      </button>
      <div className="flex shrink-0">
        {launchers.map(([name, art]) => (
          <button key={name} aria-label={name} className="flex w-6 justify-center">
            <Svg size={22} box="0 0 24 24">{art}</Svg>
          </button>
        ))}
      </div>
      <div className="ml-[4px] mr-[3px] flex"><Grip /></div>
      <div className="flex shrink-0 gap-[3px]">
        {tasks.map(({ label, icon, active }) => (
          <button
            key={label}
            className={
              'flex h-[22px] w-[111px] items-center gap-2 rounded-[3px] border pl-[6px] ' +
              (active ? 'border-[#7d7d7d] bg-[#b5b5b5]' : 'border-[#a0a0a0] bg-linear-to-b from-[#f4f4f4] to-[#dcdcdc]')
            }
          >
            {icon}
            {label}
          </button>
        ))}
      </div>
      <div className="ml-[6px] h-5 w-px bg-[#aaa]" />
      <div className="ml-auto flex shrink-0 items-center gap-[6px] pr-[5px]">
        <Grip />
        <Svg><path d="M2 15v-4M6 15V8M10 15V5" stroke="#333" strokeWidth="2.600" /><path d="M14 15V2" stroke="#aaa" strokeWidth="2.600" /></Svg>
        <Svg size={20} box="0 0 20 20">
          <path d="M10 1q4 3 8 2.500Q18 14 10 19 2 14 2 3.500 6 4 10 1z" fill="#f4f4f4" stroke="#666" />
          <circle cx="10" cy="9" r="5.500" fill="#3a74ba" />
          <path d="M10 8v4.500M10 5v1.700" stroke="#fff" strokeWidth="1.800" />
        </Svg>
        <span className="flex h-5 w-4 items-center justify-center rounded-[8px] bg-[#555]"><FaBluetoothB size={13} color="#fff" /></span>
        <span className="ml-[4px] font-bold text-[#4550a0]">FR</span>
        <Svg size={22} box="0 0 22 22">
          <rect x="1" y="2" width="20" height="14" rx="1" fill="#eee" stroke="#777" />
          <rect x="3" y="4" width="16" height="10" fill="#4a4f4a" />
          <path d="M1 1l13 13H1z" fill="#e8bd20" stroke="#9c7c0c" />
          <path d="M5 20h12" stroke="#999" strokeWidth="2" />
        </Svg>
        <Svg size={18} box="0 0 18 18">
          <path d="M0 6h3l4-4v14l-4-4H0z" fill="#333" />
          <path d="M9 6q2 3 0 6M12 4q3.500 5 0 10M15 2q5 7 0 14" fill="none" stroke="#444" strokeWidth="1.700" />
        </Svg>
        <Svg size={18} box="0 0 18 18">
          <rect x="1" y="4" width="14" height="10" rx="1" fill="none" stroke="#333" strokeWidth="2" />
          <path d="M16.500 7v4" stroke="#333" strokeWidth="2" />
          <path d="M4 11l4-4v3l4-2-4 4v-3z" fill="#333" stroke="#333" />
        </Svg>
        <svg viewBox="0 0 40 22" width="40" height="22" aria-hidden="true">
          <rect width="40" height="22" fill="#888" />
          <rect x="1" y="1" width="38" height="20" fill="#000" />
          <path d="M1 21v-2l4-1 4 1 3-2 1-3 2 4 4-2 3-1 4 1 5-1 4 1 4-1v6z" fill="#f01020" />
          <path d="M21 15v2" stroke="#1c1" />
        </svg>
        <time>mer.&nbsp; 1 nov., 12:16</time>
      </div>
    </footer>
  )
}

export default function App() {
  return (
    <div className="flex h-screen w-full flex-col overflow-hidden bg-[#2b1618] font-['Noto_Sans',sans-serif] text-[12px] leading-4 text-[#222]">
      <main className="relative min-h-0 flex-1 overflow-hidden">
        <div className="absolute bottom-0 left-12 h-[44px] w-12 bg-linear-to-b from-[#94b86a] to-[#6d9a42]" />
        <p className="absolute bottom-[17px] left-[38px] leading-4 text-[#9a9ce8]">2 080</p>
        <DesktopFiles />
        <RightEdgeWindow />

        <FirefoxWindow
          id="address-back"
          className="bottom-[39px] left-[5px] top-0 w-[400px]"
          tabs={[{ icon: <GrayD />, label: '2' }]}
          covered
          url=""
          page="bg-[#566888]"
        />
        <div className="absolute left-2 top-[287px] h-px w-8 bg-[#7d8cab]" />
        <div className="absolute left-2 top-[449px] h-[29px] w-[6px] bg-[#eee]" />
        <div className="absolute left-[59px] top-[874px] w-3 overflow-hidden text-[20px] leading-[25px] text-[#e8eef8] underline">
          <p>O</p>
          <p>li</p>
          <p>F</p>
        </div>
        <FileManagerEdge />

        <FirefoxWindow
          id="address-front"
          className="inset-y-0 left-[66px] right-[30px]"
          title="Générateur De Mot De Passe En Ligne Aléatoire Et Sécurisé - Mozilla Firefox"
          tabs={[
            { icon: <FaTwitter size={16} color="#1da1f2" className="shrink-0" />, label: 'Aperçu du f' },
            { icon: <TIcon />, label: 'Youtubeur,' },
            { icon: <InkJet />, label: 'EBS Ink-Jet' },
            { icon: <LetterIcon letter="p" box="rounded-[2px] bg-[#2a72b8]" />, label: '- #MediaAr' },
            { icon: <FaTwitter size={16} color="#1da1f2" className="shrink-0" />, label: '' },
          ]}
          url="generateurdemotdepasse.com"
          page="bg-white"
        />

        <EditorWindow />
      </main>
      <Taskbar />
    </div>
  )
}
